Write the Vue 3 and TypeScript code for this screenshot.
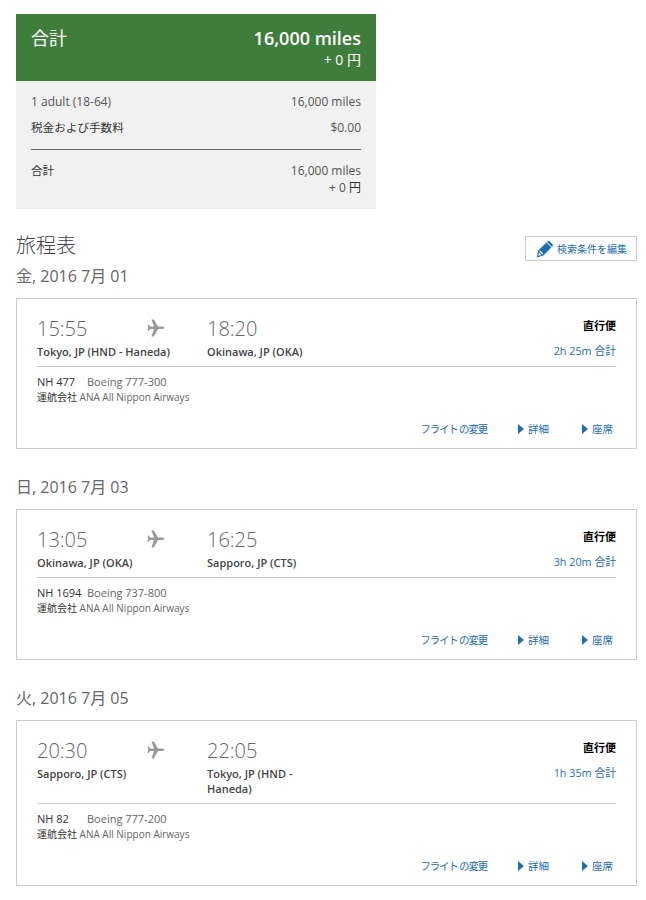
<script setup lang="ts">
interface Flight {
  date: string
  dep: string
  arr: string
  from: string
  to: string
  duration: string
  num: string
  plane: string
}
const flights: Flight[] = [
  { date: '金, 2016 7月 01', dep: '15:55', arr: '18:20', from: 'Tokyo, JP (HND - Haneda)', to: 'Okinawa, JP (OKA)', duration: '2h 25m', num: 'NH 477', plane: 'Boeing 777-300' },
  { date: '日, 2016 7月 03', dep: '13:05', arr: '16:25', from: 'Okinawa, JP (OKA)', to: 'Sapporo, JP (CTS)', duration: '3h 20m', num: 'NH 1694', plane: 'Boeing 737-800' },
  { date: '火, 2016 7月 05', dep: '20:30', arr: '22:05', from: 'Sapporo, JP (CTS)', to: 'Tokyo, JP (HND - Haneda)', duration: '1h 35m', num: 'NH 82', plane: 'Boeing 777-200' },
]
</script>

<template>
  <div class="page">
    <section class="summary">
      <header class="sum-head">
        <div class="sum-title">合計</div>
        <div class="sum-total">
          <div class="sum-miles">16,000 miles</div>
          <div class="sum-yen">+ 0 円</div>
        </div>
      </header>
      <div class="sum-body">
        <div class="sum-row"><span>1 adult (18-64)</span><span>16,000 miles</span></div>
        <div class="sum-row"><span class="dark jp">税金および手数料</span><span>$0.00</span></div>
        <div class="sum-rule"></div>
        <div class="sum-row sum-last">
          <span class="dark jp">合計</span>
          <span class="sum-right"><span>16,000 miles</span><span class="sum-right-yen">+ 0 <span class="dark">円</span></span></span>
        </div>
      </div>
    </section>

    <div class="it-head">
      <h1 class="it-title">旅程表</h1>
      <button class="edit" type="button">
        <svg class="pencil" viewBox="0 0 18 18" width="18" height="18">
          <path fill="#1f6db3" d="M0.6 17.6 L2.4 10.6 L10.4 2.6 L15.4 7.6 L7.4 15.6 Z" />
          <path fill="#1f6db3" d="M11.4 1.6 Q12.6 0.5 13.8 1.6 L16.4 4.2 Q17.5 5.4 16.4 6.6 L16 7 L11 2 Z" />
          <path fill="#fff" d="M3.4 11.2 L4.2 10.4 L6.6 12.8 L7.6 14.6 L5.4 13.4 Z" />
          <path fill="#fff" d="M2.2 15.8 L3 12.4 L5.6 15 Z" />
        </svg>
        <span>検索条件を編集</span>
      </button>
    </div>

    <section v-for="f in flights" :key="f.date" class="leg">
      <h2 class="date">{{ f.date }}</h2>
      <article class="card">
        <div class="top">
          <div class="col-dep">
            <div class="time">{{ f.dep }}</div>
            <div class="city">{{ f.from }}</div>
          </div>
          <div class="col-plane">
            <svg viewBox="0 0 18 18" width="18" height="18">
              <path fill="#999" d="M4.4 0.4 L6.8 0.4 L11 7.4 L15.6 7.4 Q17.2 7.6 17.4 8.7 Q17.2 9.8 15.6 10 L11 10 L6.8 17.4 L4.4 17.4 L7 10 L3.2 10 L1.6 12 L0.6 12 L1.2 8.7 L0.6 5.4 L1.6 5.4 L3.2 7.4 L7 7.4 Z" />
            </svg>
          </div>
          <div class="col-arr">
            <div class="time">{{ f.arr }}</div>
            <div class="city">{{ f.to }}</div>
          </div>
          <div class="col-info">
            <div class="direct">直行便</div>
            <div class="dur">{{ f.duration }} 合計</div>
          </div>
        </div>
        <div class="bottom">
          <div class="flt"><span class="num">{{ f.num }}</span><span class="plane">{{ f.plane }}</span></div>
          <div class="op"><span class="dark">運航会社</span> ANA All Nippon Airways</div>
        </div>
        <div class="links">
          <a class="lnk change">フライト の変更</a>
          <a class="lnk detail"><i class="tri"></i>詳細</a>
          <a class="lnk seat"><i class="tri"></i>座席</a>
        </div>
      </article>
    </section>
  </div>
</template>

<style scoped>
.page {
  width: 646px;
  box-sizing: border-box;
  padding: 14px 9px 0 16px;
  font-family: "Open Sans", "Noto Sans CJK JP", sans-serif;
  color: #555;
  font-size: 12px;
}
.dark { color: #333; }
.jp { font-size: 11.6px; }
.summary { width: 360px; }
.sum-head {
  height: 67px;
  box-sizing: border-box;
  background: #3f7d3c;
  color: #fff;
  display: flex;
  justify-content: space-between;
  padding: 12px 15px 0;
}
.sum-title { font-size: 18px; line-height: 24px; }
.sum-total { text-align: right; }
.sum-miles { font-size: 18px; font-weight: 600; line-height: 24px; }
.sum-yen { font-size: 14px; line-height: 19px; }
.sum-body {
  background: #f1f1f1;
  height: 128px;
  box-sizing: border-box;
  padding: 13px 15px 0;
}
.sum-row {
  display: flex;
  justify-content: space-between;
  line-height: 16px;
  margin-bottom: 10px;
}
.sum-rule { border-top: 1px solid #666; margin: 13px 0 13px; }
.sum-last { margin-bottom: 0; }
.sum-right { display: flex; flex-direction: column; align-items: flex-end; line-height: 16px; }
.sum-right-yen { margin-top: 1px; }
.it-head {
  display: flex;
  justify-content: space-between;
  align-items: flex-end;
  margin: 24px 0 3px;
  height: 28px;
}
.it-title {
  align-self: flex-start;
  margin: 0;
  font-size: 20px;
  font-weight: 300;
  line-height: 26px;
  color: #444;
}
.edit {
  width: 112px;
  height: 25px;
  box-sizing: border-box;
  margin: 0;
  padding: 0 0 0 10px;
  background: #fff;
  border: 1px solid #ccc;
  display: flex;
  align-items: center;
  gap: 3px;
  color: #1f6db3;
  font: 400 10px "Open Sans", "Noto Sans CJK JP", sans-serif;
}
.pencil { flex: none; }
.leg { margin-bottom: 26px; }
.date {
  margin: 0 0 10px;
  font-size: 16px;
  font-weight: 400;
  line-height: 24px;
  color: #666;
}
.card {
  border: 1px solid #ccc;
  padding: 17px 20px 0;
  box-sizing: border-box;
}
.top {
  display: grid;
  grid-template-columns: 110px 60px 110px 1fr;
  border-bottom: 1px solid #ccc;
  padding-bottom: 7px;
}
.time { font-size: 20px; font-weight: 300; line-height: 26px; color: #666; }
.city { font-size: 11px; font-weight: 600; color: #444; line-height: 15px; margin-top: 2px; }
.col-dep .city { white-space: nowrap; }
.col-plane { padding-top: 3px; }
.col-info { text-align: right; }
.direct { font-size: 11px; font-weight: 700; color: #000; line-height: 16px; margin-top: 2px; }
.dur { font-size: 10.8px; color: #1f6db3; line-height: 15px; margin-top: 9px; }
.bottom { padding-top: 7px; }
.flt { font-size: 11px; line-height: 15px; }
.num { display: inline-block; width: 50px; color: #333; }
.plane { color: #666; }
.op { font-size: 10px; line-height: 14px; color: #666; margin-top: 1px; }
.links {
  display: flex;
  justify-content: flex-end;
  height: 39px;
  padding: 13px 3px 0 0;
  box-sizing: border-box;
  margin-top: 5px;
  font-size: 10.5px;
  color: #1f6db3;
  line-height: 14px;
}
.lnk { display: block; white-space: nowrap; }
.change { letter-spacing: -1.2px; margin-right: 31px; }
.detail { margin-right: 33px; }
.tri {
  display: inline-block;
  border-left: 6px solid #1f6db3;
  border-top: 5px solid transparent;
  border-bottom: 5px solid transparent;
  margin-right: 4px;
  vertical-align: -1px;
}
</style>
